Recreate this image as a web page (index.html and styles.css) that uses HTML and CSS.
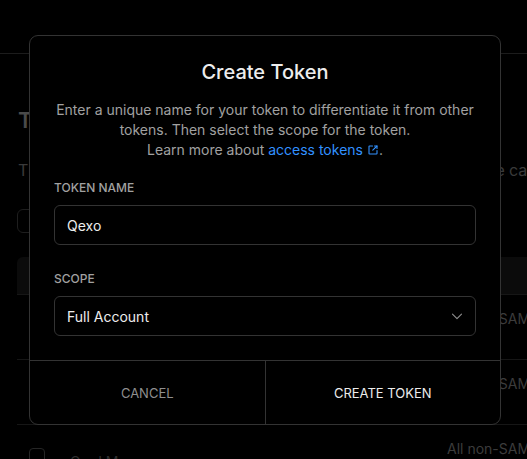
FILE: index.html
```html
<!DOCTYPE html>
<html lang="en">
<head>
<meta charset="utf-8">
<title>Create Token</title>
<link rel="stylesheet" href="styles.css">
</head>
<body>
<div class="page">
  <header class="page-header">
    <h1 class="page-title">Settings</h1>
  </header>
  <section class="section">
    <h2 class="section-title">Tokens</h2>
    <p class="section-text">These tokens allow other apps to control your whole account. Be careful, they can</p>
    <div class="search-box"></div>
    <div class="table">
      <div class="table-head"></div>
      <div class="table-row"><span class="cell-right">All non-SAML Teams</span></div>
      <div class="table-row"><span class="cell-right">All non-SAML Teams</span></div>
      <div class="table-row last">
        <span class="check"></span>
        <span class="cell-name">Card Manager</span>
        <span class="cell-right">All non-SAML Teams</span>
      </div>
    </div>
  </section>
</div>

<div class="modal" role="dialog" aria-labelledby="modal-title">
  <div class="modal-body">
    <h3 class="modal-title" id="modal-title">Create Token</h3>
    <p class="modal-desc">Enter a unique name for your token to differentiate it from other<br>tokens. Then select the scope for the token.<br>Learn more about <a class="link" href="#">access tokens<svg class="ext" width="12" height="12" viewBox="0 0 12 12" fill="none" stroke="currentColor" stroke-width="1.1" stroke-linecap="round" stroke-linejoin="round"><path d="M5.5 2H2.6a.6.6 0 0 0-.6.6v6.8a.6.6 0 0 0 .6.6h6.8a.6.6 0 0 0 .6-.6V6.5"/><path d="M7.5 2H10v2.5"/><path d="M10 2 5.8 6.2"/></svg></a>.</p>
    <div class="field">
      <label class="field-label">TOKEN NAME</label>
      <div class="input">Qexo</div>
    </div>
    <div class="field">
      <label class="field-label">SCOPE</label>
      <div class="input select">
        <span>Full Account</span>
        <svg class="chev" width="16" height="16" viewBox="0 0 16 16" fill="none" stroke="currentColor" stroke-width="1.1" stroke-linecap="round" stroke-linejoin="round"><path d="M3.5 6.2 8 10.7 12.5 6.2"/></svg>
      </div>
    </div>
  </div>
  <div class="modal-footer">
    <button class="btn btn-cancel">CANCEL</button>
    <button class="btn btn-primary">CREATE TOKEN</button>
  </div>
</div>
</body>
</html>
```

FILE: styles.css
```css
* { box-sizing: border-box; }
html, body {
  margin: 0;
  padding: 0;
  background: #000;
  height: 100%;
  overflow: hidden;
}
body {
  font-family: Inter, "Noto Sans", sans-serif;
  color: #ededed;
  position: relative;
}

/* background page (dimmed) */
.page { width: 100%; height: 459px; overflow: hidden; }
.page-header {
  height: 54px;
  border-bottom: 1px solid #1c1c1c;
  padding: 0 18px;
  overflow: hidden;
}
.page-title {
  margin: -38px 0 0;
  font-size: 34px;
  line-height: 36px;
  font-weight: 500;
  color: #3a3a3a;
}
.section { padding: 0 0 0 17px; }
.section-title {
  margin: 52px 0 0 1px;
  font-size: 22px;
  line-height: 28px;
  font-weight: 600;
  color: #4a4a4a;
}
.section-text {
  margin: 24px 0 0 1px;
  font-size: 16px;
  line-height: 24px;
  color: #3a3a3a;
  white-space: nowrap;
  overflow: hidden;
  word-spacing: -0.3px;
}
.search-box {
  margin-top: 27px;
  height: 24px;
  width: 300px;
  border: 1px solid #1e1e1e;
  border-radius: 6px;
}
.table { margin-top: 24px; }
.table-head {
  height: 38px;
  background: #0b0b0b;
  border-radius: 6px 0 0 0;
  border-bottom: 1px solid #161616;
}
.table-row {
  height: 65px;
  border-bottom: 1px solid #161616;
  display: flex;
  align-items: flex-start;
  padding-top: 14px;
  font-size: 14px;
  line-height: 20px;
  color: #3c3c3c;
}
.table-row.last { border-bottom: none; }
.cell-right {
  margin-left: auto;
  width: 80px;
  white-space: nowrap;
  overflow: hidden;
}
.check {
  width: 16px;
  height: 16px;
  border: 1px solid #262626;
  border-radius: 4px;
  margin: 9px 0 0 12px;
  flex-shrink: 0;
}
.cell-name {
  margin: 13px 0 0 25px;
  color: #2e2e2e;
}

/* modal */
.modal {
  position: absolute;
  left: 29px;
  top: 35px;
  width: 472px;
  background: #000;
  border: 1px solid #333;
  border-radius: 9px;
  overflow: hidden;
}
.modal-body { padding: 22px 24px 24px; }
.modal-title {
  margin: 0;
  text-align: center;
  font-size: 20px;
  line-height: 28px;
  font-weight: 500;
  color: #ededed;
}
.modal-desc {
  margin: 14px 0 0;
  text-align: center;
  font-size: 14px;
  line-height: 20px;
  color: #a1a1a1;
  white-space: nowrap;
}
.link {
  color: #3291ff;
  text-decoration: none;
}
.ext {
  display: inline-block;
  vertical-align: -1px;
  margin-left: 4px;
}
.field { margin-top: 20px; }
.field + .field { margin-top: 26px; }
.field-label {
  display: block;
  font-size: 12px;
  line-height: 16px;
  color: #a1a1a1;
  font-weight: 500;
  margin-bottom: 9px;
}
.input {
  height: 40px;
  border: 1px solid #333;
  border-radius: 6px;
  padding: 0 12px;
  display: flex;
  align-items: center;
  font-size: 14px;
  color: #ededed;
}
.select { justify-content: space-between; }
.chev { color: #8f8f8f; margin-right: -2px; }
.modal-footer {
  display: flex;
  border-top: 1px solid #333;
}
.btn {
  flex: 1;
  height: 63px;
  background: transparent;
  border: none;
  font-family: Inter, "Noto Sans", sans-serif;
  font-size: 13px;
  color: #8f8f8f;
  padding: 0;
}
.btn-primary {
  color: #ededed;
  border-left: 1px solid #333;
}
```
